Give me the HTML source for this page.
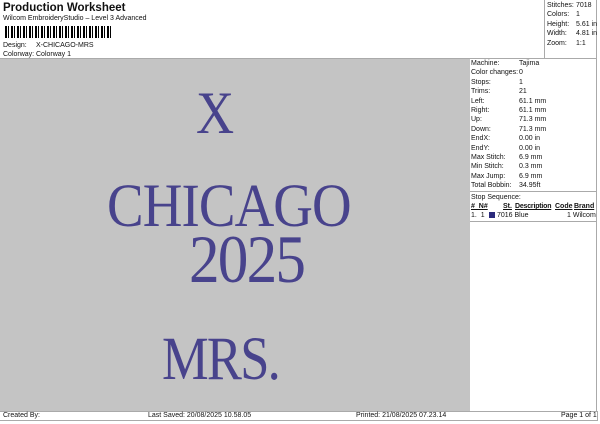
<!DOCTYPE html>
<html><head><style>
*{margin:0;padding:0;box-sizing:border-box}
body{width:600px;height:424px;background:#fff;font-family:"Liberation Sans",sans-serif;font-size:7px;color:#111;position:relative;overflow:hidden}
.a{position:absolute;white-space:nowrap}
.s{font-family:"Liberation Serif",serif;color:#48438c;position:absolute;white-space:nowrap;line-height:1;transform-origin:left top}
.r div{height:9.4px;line-height:9.4px}
</style></head><body>
<div class="a" style="left:3px;top:2px;font-size:11.5px;font-weight:bold">Production Worksheet</div>
<div class="a" style="left:3px;top:15px">Wilcom EmbroideryStudio – Level 3 Advanced</div>
<div class="a" style="left:5px;top:26px;width:106px;height:12px;background:repeating-linear-gradient(90deg,#000 0 2px,#fff 2px 3px,#000 3px 4px,#fff 4px 6px)"></div>
<div class="a" style="left:3px;top:42px">Design:</div><div class="a" style="left:36px;top:42px">X-CHICAGO-MRS</div>
<div class="a" style="left:3px;top:51px">Colorway:</div><div class="a" style="left:36px;top:51px">Colorway 1</div>
<div class="a" style="left:544px;top:0;width:53px;height:58px;border-left:1px solid #aaa;border-right:1px solid #aaa"></div>
<div class="a r" style="left:547px;top:1px"><div>Stitches:</div><div>Colors:</div><div>Height:</div><div>Width:</div><div>Zoom:</div></div>
<div class="a r" style="left:576px;top:1px"><div>7018</div><div>1</div><div>5.61 in</div><div>4.81 in</div><div>1:1</div></div>
<div class="a" style="left:0;top:58px;width:470px;height:353px;background:#c4c4c4;border-top:1px solid #aaa"></div>
<div class="a" style="left:470px;top:58px;width:127px;height:353px;border-top:1px solid #aaa;border-right:1px solid #aaa"></div>
<div class="a r" style="left:471px;top:59px"><div>Machine:</div><div>Color changes:</div><div>Stops:</div><div>Trims:</div><div>Left:</div><div>Right:</div><div>Up:</div><div>Down:</div><div>EndX:</div><div>EndY:</div><div>Max Stitch:</div><div>Min Stitch:</div><div>Max Jump:</div><div>Total Bobbin:</div></div>
<div class="a r" style="left:519px;top:59px"><div>Tajima</div><div>0</div><div>1</div><div>21</div><div>61.1 mm</div><div>61.1 mm</div><div>71.3 mm</div><div>71.3 mm</div><div>0.00 in</div><div>0.00 in</div><div>6.9 mm</div><div>0.3 mm</div><div>6.9 mm</div><div>34.95ft</div></div>
<div class="a" style="left:470px;top:191px;width:127px;border-top:1px solid #aaa"></div>
<div class="a" style="left:471px;top:194px">Stop Sequence:</div>
<div class="a" style="left:471px;top:203px;font-weight:bold;text-decoration:underline">#&nbsp; N#</div>
<div class="a" style="left:503px;top:203px;font-weight:bold;text-decoration:underline">St.</div>
<div class="a" style="left:515px;top:203px;font-weight:bold;text-decoration:underline;letter-spacing:-0.2px">Description</div>
<div class="a" style="left:555px;top:203px;font-weight:bold;text-decoration:underline">Code</div>
<div class="a" style="left:574px;top:203px;font-weight:bold;text-decoration:underline">Brand</div>
<div class="a" style="left:471px;top:212px">1.&nbsp; 1</div>
<div class="a" style="left:489px;top:212px;width:6px;height:6px;background:#2b2a7c"></div>
<div class="a" style="left:497px;top:212px">7016 Blue</div>
<div class="a" style="left:567px;top:212px">1 Wilcom</div>
<div class="a" style="left:470px;top:221px;width:127px;border-top:1px solid #aaa"></div>
<div class="a" style="left:0;top:411px;width:598px;height:10px;border-top:1px solid #aaa;border-bottom:1px solid #aaa;border-right:1px solid #aaa"></div>
<div class="a" style="left:3px;top:412px">Created By:</div>
<div class="a" style="left:148px;top:412px">Last Saved: 20/08/2025 10.58.05</div>
<div class="a" style="left:356px;top:412px">Printed: 21/08/2025 07.23.14</div>
<div class="a" style="left:561px;top:412px">Page 1 of 1</div>
<div class="s" style="left:196px;top:83px;font-size:60px;transform:scaleX(.88)">X</div>
<div class="s" style="left:107px;top:176px;font-size:61px;transform:scaleX(.9);letter-spacing:-1px">CHICAGO</div>
<div class="s" style="left:189px;top:225px;font-size:68px;transform:scaleX(.9);letter-spacing:-2px">2025</div>
<div class="s" style="left:162px;top:329px;font-size:61px;transform:scaleX(.86);letter-spacing:-2px">MRS.</div>
</body></html>
